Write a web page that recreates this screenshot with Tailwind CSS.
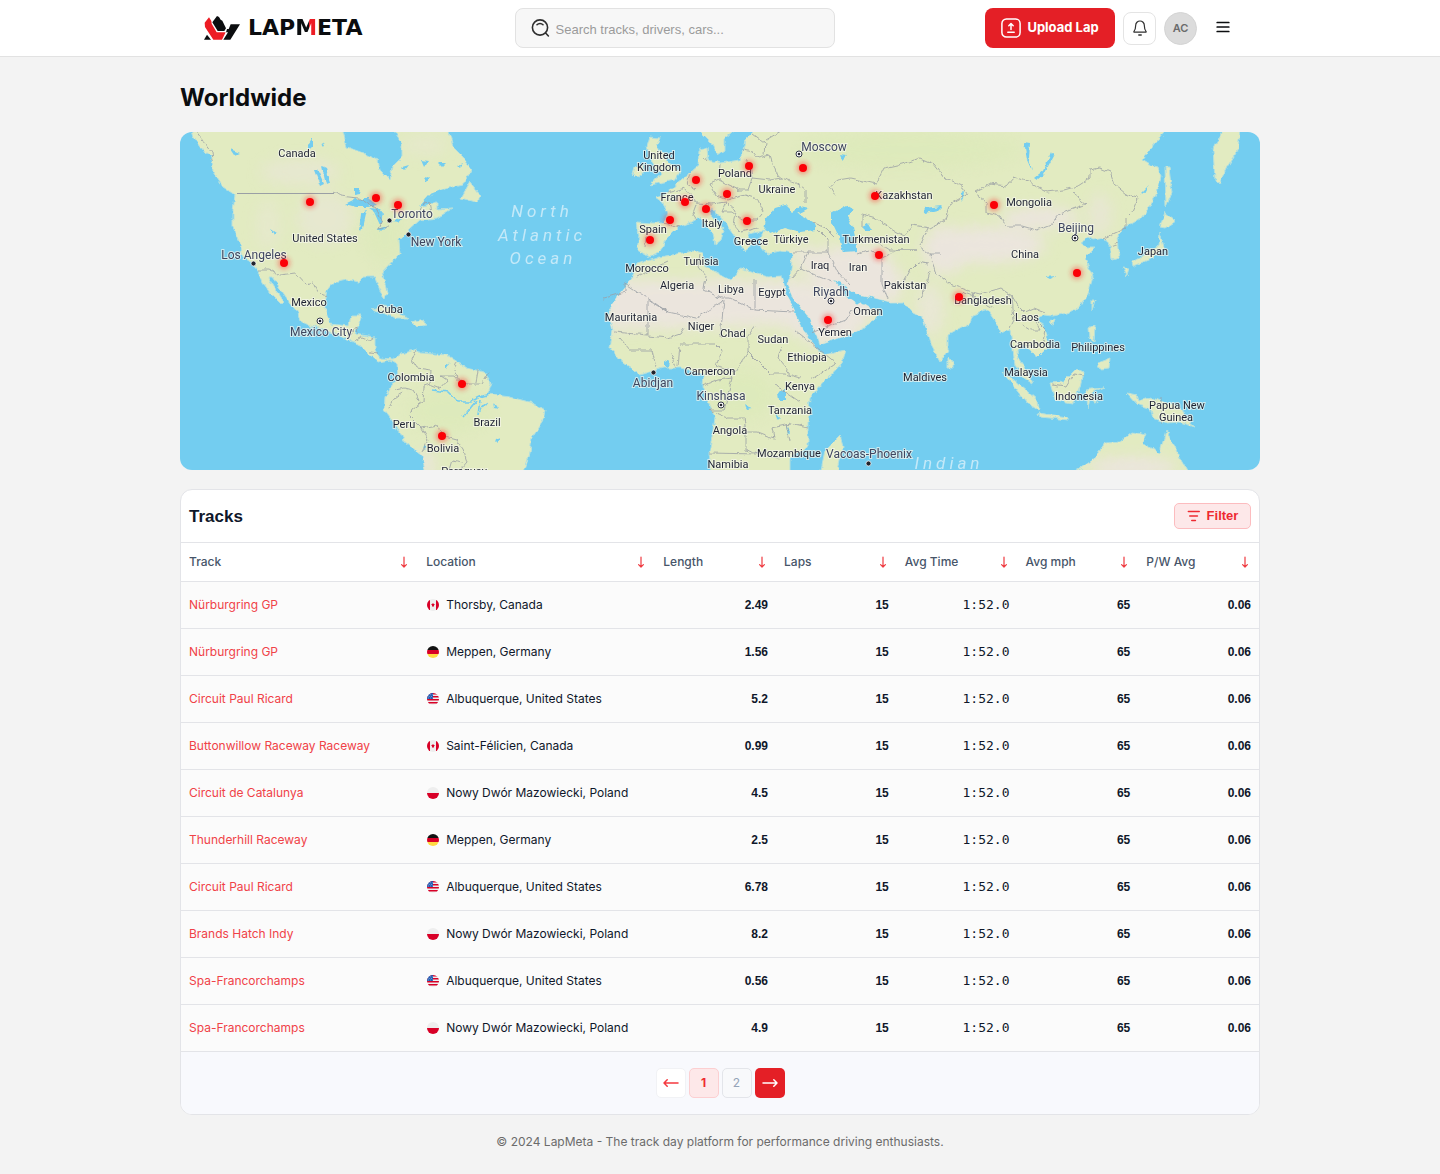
<!DOCTYPE html>
<html lang="en">
<head>
<meta charset="utf-8">
<meta name="viewport" content="width=device-width, initial-scale=1">
<title>LapMeta - Worldwide</title>
<script src="https://cdn.jsdelivr.net/npm/@tailwindcss/browser@4"></script>
</head>
<body class="min-h-screen bg-[#f3f3f3] font-['Inter',sans-serif] text-[#0f172a]">

<header class="border-b border-[#e2e2e2] bg-white">
  <div class="mx-auto flex h-14 max-w-[1080px] items-center justify-between pl-6 pr-5">
    <a href="#" aria-label="LapMeta home" class="flex w-40 items-center gap-2">
      <svg class="h-6 w-9 shrink-0" viewBox="72 47 108 72" aria-hidden="true">
        <path fill="#0b0d0f" d="M97 66 L111 47 L117 50 L122 58 L127 61 L138 84 L133 92 H113 Z"/>
        <path fill="#0b0d0f" d="M152 72 H180 L151 118 H130 L144 96 H138 L141 86 H146 Z"/>
        <path fill="#0b0d0f" d="M81 103 L93 118 H72 Z"/>
        <path fill="#ed1c24" d="M74 67 L87 51 L94 62 L95 70 L110 96 H137 L126 118 H100 L75 80 Z"/>
      </svg>
      <span class="font-['DejaVu_Sans',sans-serif] text-[22px] leading-6 font-bold text-[#0b0d0f]">LAP<span class="bg-[linear-gradient(90deg,#0b0d0f_62%,#ed1c24_62%)] bg-clip-text text-transparent">M</span>ETA</span>
    </a>
    <div class="flex h-10 w-80 items-center gap-1 rounded-lg border border-[#e2e2e2] bg-[#f7f7f7] pl-3.5 pr-3">
      <svg class="size-5 shrink-0" viewBox="0 0 20 20" fill="none" stroke="#2f2f2f" stroke-width="1.6" stroke-linecap="round" aria-hidden="true"><circle cx="10" cy="9.500" r="7.600"/><path d="M15.600 15 18.400 18M7 6.700a4.200 4.200 0 0 1 6 0"/></svg>
      <input type="search" aria-label="Search" placeholder="Search tracks, drivers, cars..." class="h-full min-w-0 flex-1 bg-transparent pt-0.5 pl-0.5 font-['Liberation_Sans',sans-serif] text-[13px] outline-none placeholder:text-[#9b9b9b]">
    </div>
    <div class="flex items-center gap-2">
      <button type="button" class="flex h-10 w-[130px] items-center justify-center gap-1.5 rounded-lg bg-[#e41f26] text-[13px] font-bold text-white">
        <svg class="size-5" viewBox="0 0 20 20" fill="none" stroke="#fff" stroke-width="1.5" stroke-linecap="round" stroke-linejoin="round" aria-hidden="true"><rect x="0.9" y="0.9" width="18.2" height="18.2" rx="4.5"/><path d="M6.800 14.200h6.400M10 11.400V6M7.800 7.800 10 5.600l2.200 2.200"/></svg>
        <span class="whitespace-nowrap">Upload Lap</span>
      </button>
      <button type="button" aria-label="Notifications" class="flex size-[33px] items-center justify-center rounded-lg border border-[#e4e4e4] bg-white">
        <svg class="size-4" viewBox="0 0 16 16" fill="none" stroke="#2f2f2f" stroke-width="1.2" stroke-linejoin="round" stroke-linecap="round" aria-hidden="true"><path d="M8 1a4.300 4.300 0 0 0-4.300 4.300c0 3.200-.8 4.900-1.800 6.200-.2.3 0 .7.4.7h11.400c.4 0 .6-.4.4-.7-1-1.300-1.800-3-1.800-6.200A4.300 4.300 0 0 0 8 1Z"/><path d="M6.800 15h2.400" stroke-width="1.5"/></svg>
      </button>
      <button type="button" aria-label="Account" class="size-[33px] rounded-full border border-[#d4d4d4] bg-[#dcdcdc] text-[11px] font-semibold text-[#6b6b6b]">AC</button>
      <button type="button" aria-label="Menu" class="flex h-8 w-[35px] items-center justify-center">
        <svg class="size-4" viewBox="0 0 16 16" stroke="#0b0d0f" stroke-width="1.7" stroke-linecap="round" aria-hidden="true"><path d="M2.200 2.500h11.600M2.200 7h11.600M2.200 11.500h11.600"/></svg>
      </button>
    </div>
  </div>
</header>

<main class="mx-auto flex max-w-[1080px] flex-col pt-[25px]">
  <h1 class="text-2xl leading-8 font-bold text-[#0b0d0f]">Worldwide</h1>

  <section aria-label="Track map" class="mt-[18px] h-[338px] overflow-hidden rounded-xl bg-[#73cdf0]">
    <svg class="block h-full w-full" viewBox="180 132 1080 338" preserveAspectRatio="xMidYMid slice">
      <defs>
        <filter id="coast" x="0" y="0" width="100%" height="100%"><feTurbulence type="fractalNoise" baseFrequency="0.14" numOctaves="3" seed="4"/><feDisplacementMap in="SourceGraphic" scale="5" xChannelSelector="R" yChannelSelector="G"/></filter>
        <filter id="soft" x="-20%" y="-20%" width="140%" height="140%"><feGaussianBlur stdDeviation="7"/></filter>
        <filter id="glow" x="-150%" y="-150%" width="400%" height="400%"><feGaussianBlur stdDeviation="2.4"/></filter>
        <path id="land" d="
          M190 128 L193 137 202 150 212 157 213 172 223 187 235 195 233 210 233 227 240 243 243 257 252 263 258 270 263 283 270 293 282 305 284 303 276 290 268 277 272 277 280 288 290 303 298 313 300 321 313 327 323 329 343 337 352 342 362 347 368 353 378 362 390 360 397 364 398 377 390 388 385 397 384 410 397 427 405 442 422 455 426 475 523 475 530 453 532 437 543 420 545 411 533 403 510 397 488 394 492 383 484 372 467 368 447 355 420 353 417 349 402 354 393 359 380 358 375 350 375 337 355 334 362 315 351 315 349 325 330 323 325 310 325 298 327 290 333 283 347 280 360 282 363 277 375 277 381 293 385 298 387 292 382 273 400 254 399 240 409 230 420 220 437 218 453 208 437 209 437 202 420 207 428 197 440 190 462 185 472 170 463 157 453 147 448 128 392 128 402 143 402 157 392 167 390 180 380 170 378 160 363 153 347 147 342 128Z
          M461 198 470 182 480 195 478 203Z
          M372 309 384 306 408 318 396 318Z M412 322 420 319 428 324 416 326Z
          M650 137 660 138 656 147 665 155 671 165 680 172 675 180 650 185 660 174 652 163 647 147Z
          M635 167 643 165 643 173 637 178 633 174Z
          M637 222 653 223 664 223 668 213 662 202 655 197 668 193 678 182 690 173 698 166 699 150 707 147 708 160 720 163 740 160 743 150 745 140 757 128 1168 128 1150 150 1142 160 1150 165 1158 167 1161 177 1157 193 1143 217 1133 223 1125 227 1117 237 1119 258 1112 260 1110 247 1105 238 1093 240 1088 237 1080 242 1087 247 1096 247 1085 258 1093 277 1087 297 1078 308 1067 313 1053 316 1045 315 1038 318 1048 335 1048 347 1037 358 1033 352 1023 345 1017 350 1018 358 1027 370 1032 384 1023 378 1015 365 1013 350 1010 330 1000 333 995 320 988 310 973 315 970 323 948 335 948 350 940 362 930 343 923 318 913 313 903 302 890 302 867 296 853 293 840 282 834 281 847 297 857 304 860 302 868 307 880 312 870 325 853 333 820 345 818 337 807 315 793 298 787 284 790 277 793 253 780 251 767 254 762 248 760 238 764 231 747 234 753 243 744 250 733 233 723 220 712 208 709 214 724 230 721 240 715 245 713 233 700 217 692 222 678 227 665 240 660 253 650 257 637 250 639 235Z
          M697 128 712 143 718 155 725 150 725 138 737 128Z
          M650 260 660 257 693 251 703 253 705 266 730 280 740 269 767 277 782 276 787 297 792 306 803 330 818 350 824 354 846 350 842 363 810 397 808 423 808 447 790 457 790 475 712 475 709 453 713 430 715 418 702 387 703 375 682 368 663 368 640 375 620 360 610 347 613 330 608 312 620 293 633 277 637 264Z
          M820 475 825 450 840 435 843 447 837 475Z
          M948 358 953 362 953 368 948 368Z
          M1224 128 1213 150 1215 180 1219 184 1227 167 1238 150 1240 128Z
          M1165 168 1169 168 1172 193 1166 207Z
          M1165 212 1176 221 1165 228 1160 227Z
          M1160 233 1164 247 1153 258 1133 266 1132 262 1150 252 1159 244Z M1123 267 1129 268 1127 275Z
          M1092 300 1095 300 1092 311Z M1049 322 1055 319 1053 325Z
          M1088 328 1095 325 1094 342 1089 338Z M1097 363 1110 358 1109 368 1101 369Z
          M1002 372 1013 379 1037 400 1038 410 1027 403 1012 384Z
          M1038 413 1067 417 1069 420 1040 417Z
          M1050 383 1063 382 1077 368 1083 372 1080 387 1073 403 1055 400Z
          M1086 390 1105 387 1092 392 1097 404 1090 398 1088 409Z
          M1127 393 1137 395 1139 401 1150 397 1180 408 1187 420 1195 427 1180 422 1167 423 1153 418 1150 408 1138 405Z
          M1070 475 1093 460 1105 443 1120 442 1133 432 1147 435 1143 443 1160 453 1166 430 1177 452 1190 475Z"/>
        <clipPath id="inland"><use href="#land"/></clipPath>
      </defs>

      <!-- land, with dry regions tinted over it -->
      <g filter="url(#coast)">
        <use href="#land" fill="#e2ebc1" stroke="#b6e0dc" stroke-width="1"/>
        <g clip-path="url(#inland)">
          <g filter="url(#soft)" fill="#ebe5dd">
            <path d="M605 280H800L880 305 850 345 815 345 780 325 700 328 605 330Z"/>
            <path d="M785 250 880 245 905 280 895 305 830 300Z"/>
            <ellipse cx="985" cy="245" rx="60" ry="18"/><ellipse cx="1040" cy="218" rx="38" ry="11"/>
            <ellipse cx="945" cy="250" rx="22" ry="24"/><ellipse cx="300" cy="172" rx="40" ry="14" opacity=".5"/>
            <ellipse cx="325" cy="218" rx="28" ry="26" opacity=".5"/><ellipse cx="930" cy="310" rx="14" ry="26" opacity=".7"/>
            <ellipse cx="1132" cy="467" rx="45" ry="10"/><ellipse cx="425" cy="145" rx="22" ry="10" opacity=".4"/>
            <ellipse cx="1100" cy="215" rx="12" ry="22" opacity=".6"/><ellipse cx="425" cy="463" rx="10" ry="10"/>
            <ellipse cx="268" cy="225" rx="12" ry="25" opacity=".4"/>
          </g>
          <g filter="url(#soft)" fill="#d8e9b4" opacity=".4">
            <ellipse cx="910" cy="150" rx="110" ry="18"/><ellipse cx="740" cy="395" rx="35" ry="25"/><ellipse cx="450" cy="410" rx="40" ry="22"/><ellipse cx="385" cy="235" rx="20" ry="28"/>
          </g>
        </g>
        <g fill="#73cdf0">
          <path d="M764 231 766 218 775 208 785 205 792 212 800 206 809 208 798 214 813 222 816 230 800 232 785 228 770 234Z"/>
          <path d="M832 213 847 205 854 210 847 217 853 227 855 237 858 252 843 253 839 237 832 222Z"/>
          <path d="M345 204 355 199 369 199 377 205 368 207 356 207ZM361 214 367 210 363 228 359 230ZM368 208 380 209 384 214 380 225 374 212ZM376 229 388 226 383 231ZM391 222 402 218 398 223Z"/>
          <path d="M314 170 318 170 324 184 320 186ZM322 166 326 168 331 183 326 184ZM308 144 312 138 312 147 308 150ZM354 188 361 188 360 193 354 194ZM320 145 325 142 322 148Z"/>
          <path d="M230 149 240 153 234 155ZM270 229 276 233 274 236ZM402 167 409 165 405 170ZM421 160 428 161 424 167ZM438 163 446 163 442 167ZM424 176 430 178 426 183ZM457 166 463 163 460 168Z"/>
          <path d="M1034 178 1044 170 1051 153 1053 157 1044 174 1037 180ZM1024 142 1030 143 1029 158 1032 171 1027 160ZM1141 193 1148 186 1144 194ZM1046 277 1057 276 1050 279Z"/>
          <path d="M924 208 942 206 938 210 926 213ZM862 227 868 224 872 231 866 231ZM960 194 964 191 963 200ZM840 155 846 156 842 160ZM778 393 786 388 786 400 779 400ZM786 424 790 432 788 435ZM775 412 781 419 777 418ZM744 405 752 408 746 409ZM664 360 669 362 668 368 664 366Z"/>
          <path d="M447 363 450 364 447 368ZM483 405 488 402 479 414ZM493 402 498 409 494 408ZM422 446 427 445 425 449ZM494 440 500 438 497 443Z"/>
        </g>
        <path fill="none" stroke="#73cdf0" stroke-width="1.6" d="M432 390 448 392 458 402 470 402 480 397 490 394M476 401 464 416M480 400 478 415M420 206 430 195 443 190"/>
      </g>

      <!-- national borders -->
      <g filter="url(#coast)" fill="none" stroke="#9a9fa5" stroke-width=".8">
        <path d="M195 130 212 152 213 160M334 192 340 196 358 198 376 208 382 220 378 229 390 227M421 211 424 202 430 203 432 213M258 270 270 270 280 275 296 273 306 284 312 282 320 294 327 296M349 337 357 327 358 334M354 341 362 337 370 340 374 337M379 353 370 352M416 350 412 360 417 368 431 370 430 384 424 386 423 402 412 410 410 416M395 390 405 388 413 390 420 402M389 408 395 398 403 392M430 384 440 388 447 380 441 376 455 376 461 383 470 384 480 384M456 362 453 370 463 384M478 370 476 383M488 373 482 383M410 417 421 428 438 425 441 436 456 440 463 449 467 462 460 470M421 428 428 440 422 452M449 470 452 460 463 462"/>
        <path d="M640 226 644 224M647 226 645 247M664 223 680 227M668 193 685 188 692 196 697 203 693 214 697 220M690 174 687 184 696 190M705 158 708 162M720 164 719 180 727 184 740 190 748 190 752 178 750 164 745 158M719 180 710 184 716 196 728 200 745 195M697 203 712 204 726 202 722 212 732 212 742 220 757 220 762 214M745 195 757 199 763 212M726 202 736 211 733 224 740 232M740 232 758 228M742 150 753 152 758 158 770 155 777 175 781 178 770 180 752 178M781 178 795 182 806 190 806 204M753 134 765 143 764 155M786 128 766 140M813 223 826 228 834 236M818 230 828 240 828 252 793 252M828 252 838 272 850 285M808 252 801 268 790 280M801 268 817 276 832 282M857 254 868 250 882 258 882 284 888 300M882 258 898 250 916 250M888 285 902 284 910 270 918 262 928 264M836 196 830 186 838 180 850 178 876 184 884 168 902 164 920 158 934 164 945 178 962 186 968 194 950 204 945 220 930 228 912 225 903 236 890 228 876 218 862 214 862 228M862 240 874 240 890 250 916 250M928 228 920 246 930 254 940 254M930 254 935 272 950 284 972 292 980 294 1000 288 1012 296M972 292 974 302 986 304 994 308M918 300 925 290 930 272M962 292 974 296 978 300"/>
        <path d="M974 192 990 184 1006 186 1014 177 1028 182 1046 192 1064 190 1078 186 1090 178 1090 170 1100 168 1110 172 1114 184 1126 194 1138 198 1132 212 1126 218 1126 228 1104 238M974 192 986 202 986 213 1000 216 1006 226 1022 226 1036 230 1052 224 1060 214 1086 204 1078 198 1074 192M1110 246 1118 243M1012 296 1018 306 1024 312 1034 308 1044 312M1012 296 1014 320 1010 328M1022 325 1030 330 1040 330 1034 318 1046 330 1044 342 1026 346M1052 385 1066 387 1074 374 1082 376M1162 398 1162 423"/>
        <path d="M637 277 655 268 668 262M700 254 698 266 706 276 704 290 722 298 730 298 755 310 755 278M604 298 625 292 625 283 668 312 648 300 648 335 614 332M668 312 696 318 724 300M724 300 720 338M755 310 794 312M755 326 748 336 748 352M680 344 716 344 722 350 716 366M648 336 668 338 680 334 684 328M620 338 630 350 652 350 656 368M672 352 676 368M680 346 678 366M716 366 735 372 748 352M748 352 770 374 786 374 800 378M782 346 778 358 792 376M795 330 810 342 836 363 810 380M702 386 718 380 732 378 730 372M732 378 724 410 710 410M710 410 728 418 744 418 746 432 758 432 774 438 772 428 790 424 808 428M709 453 758 454 766 450M746 432 746 450 758 454M774 384 800 402M786 424 790 440M766 456 778 458 790 452M812 333 830 326 846 320 852 310"/>
      </g>
      <path fill="none" stroke="#9a9fa5" d="M237 193.500H334"/>

      <!-- oceans -->
      <g class="fill-[#c4e9f8] font-['Roboto',sans-serif] text-[17px] tracking-[4px] italic" text-anchor="middle">
        <text x="542" y="217">North</text><text x="542" y="241">Atlantic</text><text x="543" y="264">Ocean</text><text x="949" y="469">Indian</text>
      </g>

      <g id="countries" class="fill-[#1f2333] stroke-[#f6f8ee]/70 font-['Roboto',sans-serif] text-[11px]" stroke-width="2" paint-order="stroke" text-anchor="middle"></g>
      <g id="cities" class="fill-[#3f4660] stroke-[#f6f8ee]/70 font-['Roboto',sans-serif] text-[12px]" stroke-width="2" paint-order="stroke" text-anchor="middle"></g>
      <g fill="#22242d" stroke="#fff" stroke-opacity=".7"><circle cx="389.500" cy="220.500" r="2.500"/><circle cx="408.500" cy="234.500" r="2.500"/><circle cx="253.500" cy="263.500" r="2.500"/><circle cx="653.500" cy="372.500" r="2.500"/><circle cx="868.500" cy="463.500" r="2.500"/></g>
      <g id="capitals"></g>
      <g id="pins"></g>
    </svg>
  </section>

  <section class="mt-[19px] overflow-hidden rounded-xl border border-[#e3e4e8] bg-white">
    <div class="flex h-[52px] items-center justify-between px-2">
      <h2 class="pt-px font-['Liberation_Sans',sans-serif] text-[17px] leading-6 font-bold">Tracks</h2>
      <button type="button" class="flex h-[26px] w-[77px] items-center justify-center gap-1.5 rounded-[5px] border border-[#fcbcbf] bg-[#fde8e9] font-['Liberation_Sans',sans-serif] text-[13px] font-bold text-[#ee2a31]">
        <svg class="h-3 w-3.5" viewBox="0 0 14 12" stroke="currentColor" stroke-width="1.6" stroke-linecap="round" aria-hidden="true"><path d="M1.400 1.500h10.800M2.800 6h7.600M4.800 10.500h3.600"/></svg>
        Filter
      </button>
    </div>
    <table class="w-full table-fixed border-t border-[#e3e4e8] text-xs">
      <colgroup><col class="w-[22%]"><col class="w-[22%]"><col><col><col><col><col></colgroup>
      <thead><tr id="heads" class="h-[39px] border-b border-[#e3e4e8]"></tr></thead>
      <tbody id="rows" class="bg-[#fbfbfb]"></tbody>
    </table>
    <nav aria-label="Pagination" class="flex h-[62px] items-center justify-center gap-[3px] bg-[#f8f9fd] text-xs">
      <button type="button" aria-label="Previous page" class="flex size-[30px] items-center justify-center rounded-[5px] border border-[#f1f2f5] bg-white text-[#f5393f]"><svg class="h-2.5 w-4" viewBox="0 0 16 10" fill="none" stroke="currentColor" stroke-width="1.500" stroke-linecap="round" stroke-linejoin="round" aria-hidden="true"><path d="M15 5H1M4.200 1.800 1 5l3.200 3.200"/></svg></button>
      <button type="button" aria-current="page" class="size-[30px] rounded-[5px] border border-[#fccfd1] bg-[#fde8e9] font-bold text-[#ee2a31]">1</button>
      <button type="button" class="size-[30px] rounded-[5px] border border-[#e3e5ea] bg-[#f8f9fb] text-[#94a3b8]">2</button>
      <button type="button" aria-label="Next page" class="flex size-[30px] items-center justify-center rounded-[5px] bg-[#e41f26] text-white"><svg class="h-2.5 w-4" viewBox="0 0 16 10" fill="none" stroke="currentColor" stroke-width="1.500" stroke-linecap="round" stroke-linejoin="round" aria-hidden="true"><path d="M1 5h14M11.800 1.800 15 5l-3.200 3.200"/></svg></button>
    </nav>
  </section>
</main>

<footer class="py-[18px] text-center text-xs leading-[18px] text-[#6b6b6b]">© 2024 LapMeta - The track day platform for performance driving enthusiasts.</footer>

<script>
const label = ([t, x, y]) => `<text x="${x}" y="${y}">${t}</text>`;
document.getElementById('countries').innerHTML = [
  ['Canada',297,157],['United States',325,242],['Mexico',309,306],['Cuba',390,313],['Colombia',411,381],['Peru',404,428],['Brazil',487,426],['Bolivia',443,452],['Paraguay',464,475],
  ['United',659,159],['Kingdom',659,171],['Poland',735,177],['Ukraine',777,193],['France',677,201],['Spain',653,233],['Italy',712,227],['Greece',751,245],['Türkiye',791,243],['Tunisia',701,265],['Morocco',647,272],['Algeria',677,289],['Libya',731,293],['Egypt',772,296],['Iraq',820,269],['Iran',858,271],['Turkmenistan',876,243],['Kazakhstan',904,199],['Pakistan',905,289],['Oman',868,315],['Yemen',835,336],
  ['Mauritania',631,321],['Niger',701,330],['Chad',733,337],['Sudan',773,343],['Ethiopia',807,361],['Cameroon',710,375],['Kenya',800,390],['Tanzania',790,414],['Angola',730,434],['Mozambique',789,457],['Namibia',728,468],
  ['Mongolia',1029,206],['China',1025,258],['Japan',1153,255],['Bangladesh',983,304],['Laos',1027,321],['Cambodia',1035,348],['Philippines',1098,351],['Malaysia',1026,376],['Maldives',925,381],['Indonesia',1079,400],['Papua New',1177,409],['Guinea',1176,421]
].map(label).join('');
document.getElementById('cities').innerHTML = [
  ['Toronto',412,218],['New York',436,246],['Los Angeles',254,259],['Mexico City',321,336],['Moscow',824,151],['Riyadh',831,296],['Abidjan',653,387],['Kinshasa',721,400],['Vacoas-Phoenix',869,458],['Beijing',1076,232]
].map(label).join('');
document.getElementById('capitals').innerHTML = [[320,321],[799,154],[831,301],[721,405],[1075,238]]
  .map(([x, y]) => `<circle cx="${x}" cy="${y}" r="3" fill="#fff" stroke="#34384a" stroke-width="1"/><circle cx="${x}" cy="${y}" r="1.300" fill="#22242d"/>`).join('');
document.getElementById('pins').innerHTML = [[310,202],[376,198],[398,205],[284,263],[462,384],[442,436],[696,180],[749,166],[803,168],[727,194],[685,202],[706,209],[670,220],[747,221],[650,240],[875,196],[879,255],[994,205],[1077,273],[959,297],[828,320]]
  .map(([x, y]) => `<circle cx="${x}" cy="${y}" r="6" fill="#ff2020" opacity=".45" filter="url(#glow)"/><circle cx="${x}" cy="${y}" r="4" fill="#fb0007"/>`).join('');

const down = '<svg class="h-3 w-3 text-[#ef3a40]" viewBox="0 0 12 12" fill="none" stroke="currentColor" stroke-width="1.200" stroke-linecap="round" stroke-linejoin="round" aria-hidden="true"><path d="M6 1v10M3.600 8.600 6 11l2.400-2.400"/></svg>';
document.getElementById('heads').innerHTML = ['Track', 'Location', 'Length', 'Laps', 'Avg Time', 'Avg mph', 'P/W Avg']
  .map(h => `<th scope="col" class="px-2 text-left font-medium text-[#475569]"><button type="button" class="flex w-full items-center justify-between whitespace-nowrap">${h}${down}</button></th>`).join('');

const flag = body => `<svg class="size-3.5 shrink-0 overflow-hidden rounded-full border border-transparent bg-clip-padding" viewBox="0 0 12 12" aria-hidden="true">${body}</svg>`;
const flags = {
  ca: flag('<path fill="#eee" d="M0 0h12v12H0z"/><path fill="#d80027" d="M0 0h3v12H0zM9 0h3v12H9zM6 3.800 6.700 5l1.200.3-1 1.100.1 1H5l.1-1-1-1.100L5.300 5z"/>'),
  de: flag('<path fill="#111" d="M0 0h12v4H0z"/><path fill="#d80027" d="M0 4h12v4H0z"/><path fill="#ffda44" d="M0 8h12v4H0z"/>'),
  us: flag('<path fill="#eee" d="M0 0h12v12H0z"/><path fill="#d80027" d="M0 0h12v1.500H0zM0 3h12v1.500H0zM0 6h12v1.500H0zM0 9h12v1.500H0z"/><path fill="#1653b0" d="M0 0h6v6H0z"/><path stroke="#dfe8f8" stroke-width=".7" stroke-dasharray=".8 1.100" d="M1 1.800h5M.5 3.400h5M1 5h5"/>'),
  pl: flag('<path fill="#eee" d="M0 0h12v6H0z"/><path fill="#d80027" d="M0 6h12v6H0z"/>')
};
const places = { ca: 'Thorsby, Canada', cf: 'Saint-Félicien, Canada', de: 'Meppen, Germany', us: 'Albuquerque, United States', pl: 'Nowy Dwór Mazowiecki, Poland' };
const num = v => `<td class="px-2 text-right font-['Liberation_Sans',sans-serif] font-bold">${v}</td>`;
document.getElementById('rows').innerHTML = [
  ['Nürburgring GP','ca','2.49'],['Nürburgring GP','de','1.56'],['Circuit Paul Ricard','us','5.2'],['Buttonwillow Raceway Raceway','cf','0.99'],['Circuit de Catalunya','pl','4.5'],
  ['Thunderhill Raceway','de','2.5'],['Circuit Paul Ricard','us','6.78'],['Brands Hatch Indy','pl','8.2'],['Spa-Francorchamps','us','0.56'],['Spa-Francorchamps','pl','4.9']
].map(([track, place, km]) => `<tr class="h-[47px] border-b border-[#e3e4e8]">
  <td class="px-2 whitespace-nowrap"><a href="#" class="text-[#f04248]">${track}</a></td>
  <td class="px-2 whitespace-nowrap"><span class="flex items-center gap-1.5">${flags[place] || flags.ca}${places[place]}</span></td>
  ${num(km)}${num('15')}
  <td class="px-2 text-right font-['DejaVu_Sans_Mono',monospace] text-[13px]">1:52.0</td>
  ${num('65')}${num('0.06')}
</tr>`).join('');
</script>
</body>
</html>
